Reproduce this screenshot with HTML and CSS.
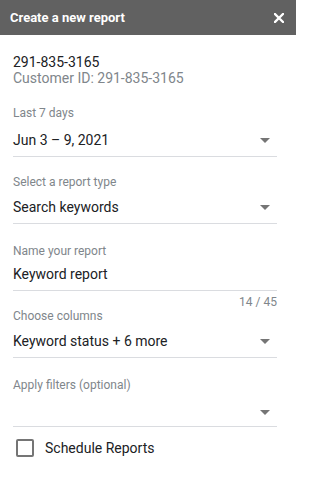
FILE: index.html
```html
<!DOCTYPE html>
<html lang="en">
<head>
<meta charset="utf-8">
<title>Create a new report</title>
<link rel="stylesheet" href="styles.css">
</head>
<body>
<div class="dialog">
  <header class="header">
    <span class="title">Create a new report</span>
    <button class="close" aria-label="Close">
      <svg width="10" height="10" viewBox="0 0 10 10"><path d="M1 1L9 9M9 1L1 9" stroke="#ffffff" stroke-width="2.3" stroke-linecap="square" fill="none"/></svg>
    </button>
  </header>
  <main class="content">
    <div class="account">
      <div class="account-name">291-835-3165</div>
      <div class="account-id">Customer ID: 291-835-3165</div>
    </div>

    <div class="field field-date">
      <div class="label">Last 7 days</div>
      <div class="select"><span class="value">Jun 3 – 9, 2021</span><span class="arrow"></span></div>
    </div>

    <div class="field field-type">
      <div class="label">Select a report type</div>
      <div class="select"><span class="value">Search keywords</span><span class="arrow"></span></div>
    </div>

    <div class="field field-name">
      <div class="label">Name your report</div>
      <div class="select"><span class="value">Keyword report</span></div>
      <div class="counter">14 / 45</div>
    </div>

    <div class="field field-columns">
      <div class="label">Choose columns</div>
      <div class="select"><span class="value">Keyword status + 6 more</span><span class="arrow"></span></div>
    </div>

    <div class="field field-filters">
      <div class="label">Apply filters (optional)</div>
      <div class="select"><span class="value"></span><span class="arrow"></span></div>
    </div>

    <label class="checkbox-row">
      <span class="checkbox"></span>
      <span class="checkbox-label">Schedule Reports</span>
    </label>
  </main>
</div>
</body>
</html>
```

FILE: styles.css
```css
* { box-sizing: border-box; }

html, body {
  margin: 0;
  padding: 0;
  background: #ffffff;
}

body {
  font-family: Roboto, "Liberation Sans", Arial, sans-serif;
  color: #202124;
  width: 296px;
}

.header {
  height: 35px;
  background: #616161;
  display: flex;
  align-items: center;
  justify-content: space-between;
  padding: 0 12px 0 10px;
}

.title {
  color: #ffffff;
  font-size: 13px;
  font-weight: 700;
  line-height: 16px;
}

.close {
  width: 10px;
  height: 10px;
  padding: 0;
  margin: 0;
  border: 0;
  background: none;
  display: block;
}

.close svg { display: block; }

.content {
  padding: 0 19px 0 13px;
  display: flex;
  flex-direction: column;
}

.account {
  margin-top: 19px;
  font-size: 14px;
  line-height: 16px;
}

.account-name { color: #202124; }
.account-id { color: #80868b; }

.field { display: flex; flex-direction: column; }

.label {
  font-size: 12px;
  line-height: 14px;
  color: #80868b;
}

.select {
  display: flex;
  align-items: center;
  justify-content: space-between;
  border-bottom: 1px solid #dadce0;
  padding-bottom: 6px;
}

.value {
  font-size: 14px;
  line-height: 20px;
  height: 20px;
  color: #202124;
}

.arrow {
  width: 0;
  height: 0;
  border-left: 5px solid transparent;
  border-right: 5px solid transparent;
  border-top: 5px solid #757575;
  margin-right: 7px;
}

.field-date { margin-top: 20px; }
.field-date .select { padding-top: 10px; }

.field-type { margin-top: 18px; }
.field-type .select { padding-top: 8px; }

.field-name { margin-top: 20px; }
.field-name .select { padding-top: 6px; }

.counter {
  margin-top: 4px;
  font-size: 12px;
  line-height: 14px;
  color: #80868b;
  text-align: right;
}

.field-columns { margin-top: 0; }
.field-columns .select { padding-top: 8px; }

.field-filters { margin-top: 20px; }
.field-filters .select { padding-top: 10px; padding-bottom: 4px; }

.checkbox-row {
  margin-top: 11px;
  display: flex;
  align-items: center;
  padding-left: 3px;
}

.checkbox {
  width: 18px;
  height: 18px;
  border: 2px solid #757575;
  border-radius: 2px;
  flex: none;
}

.checkbox-label {
  margin-left: 11px;
  font-size: 14px;
  line-height: 20px;
  color: #202124;
}
```
